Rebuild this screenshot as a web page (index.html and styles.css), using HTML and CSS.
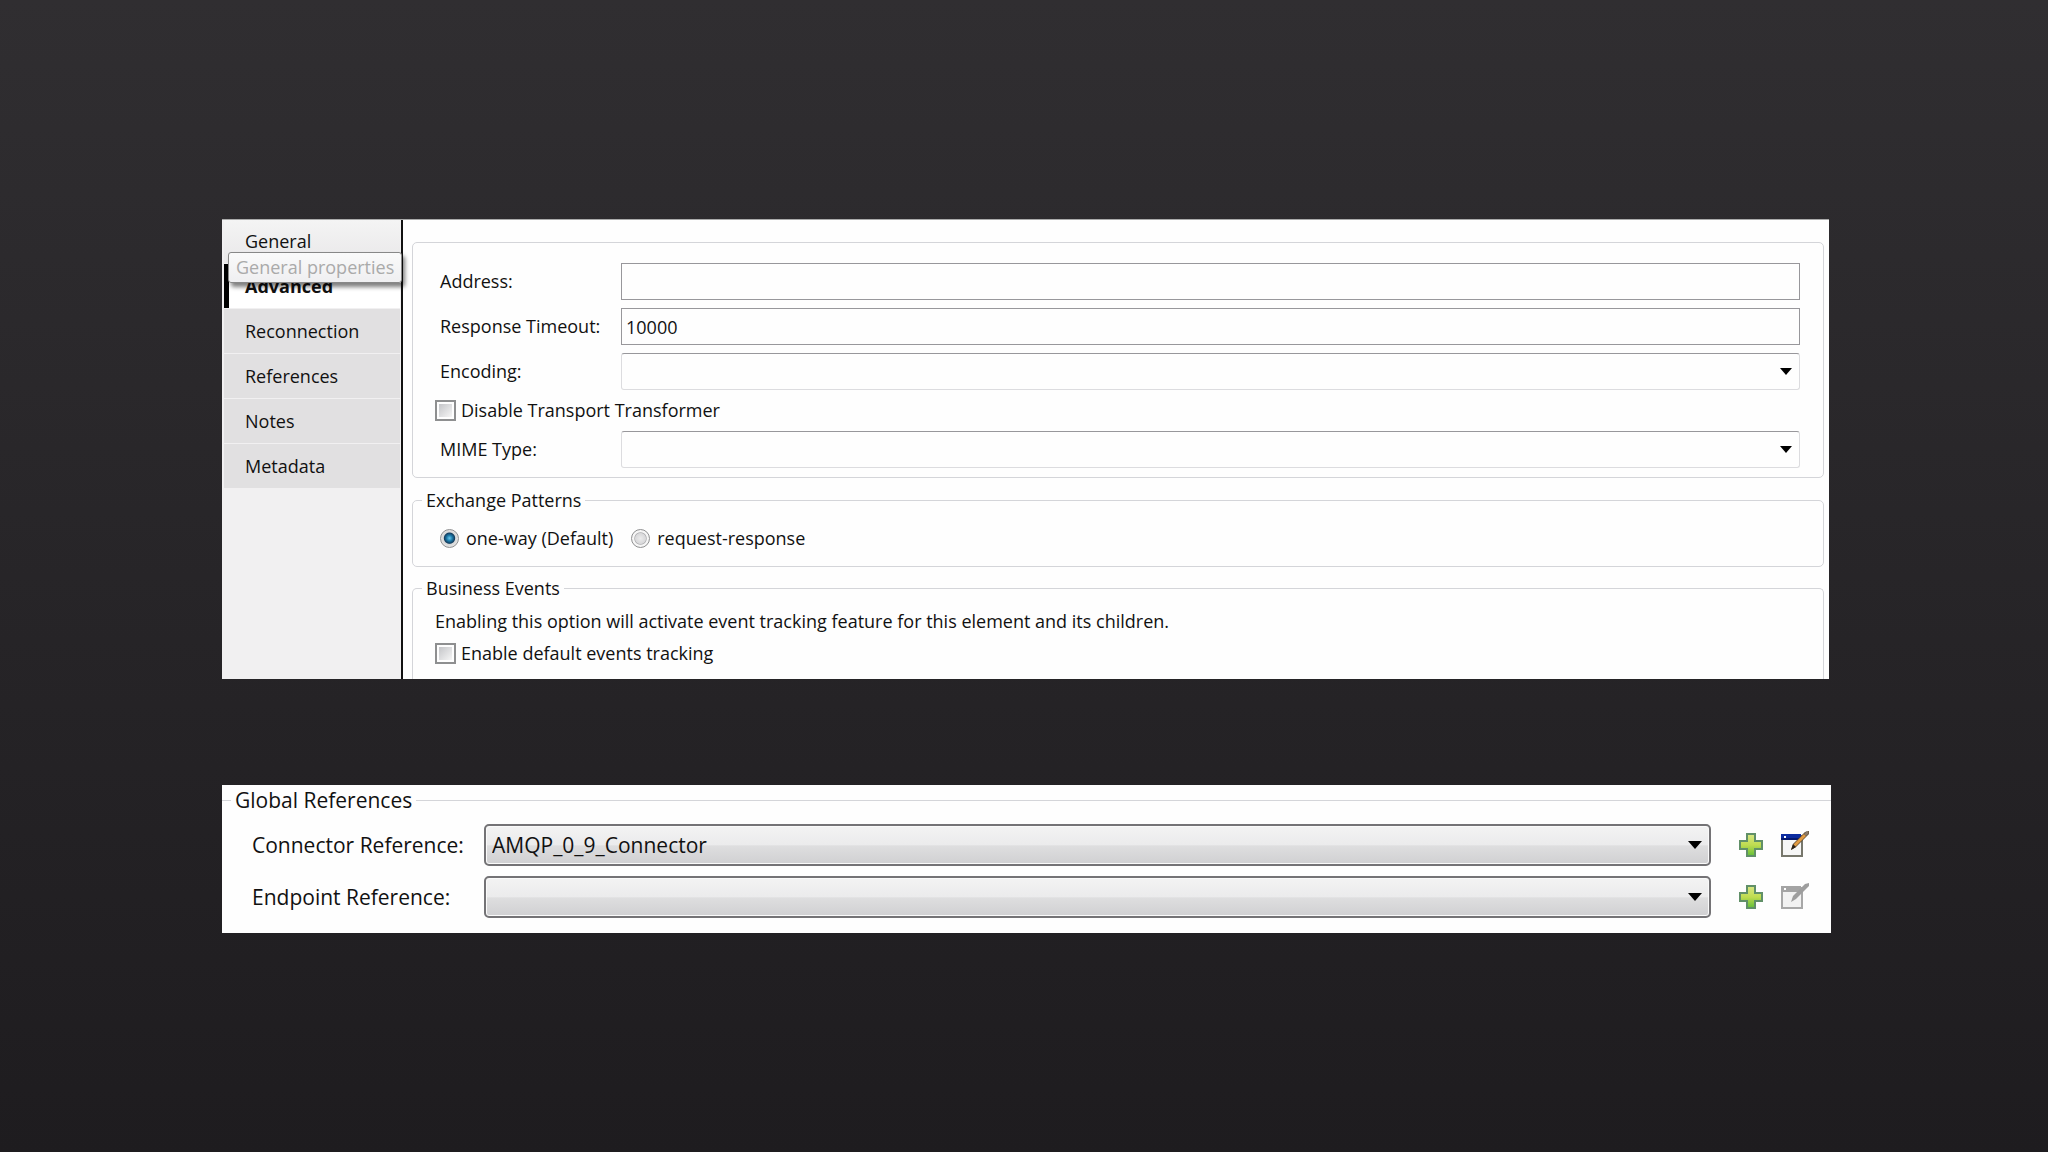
FILE: index.html
```
<!DOCTYPE html>
<html lang="en">
<head>
    <meta charset="utf-8">
    <title>Endpoint properties</title>
    <link rel="stylesheet" href="styles.css">
</head>

<body>
    <main class="slide">
        <section class="panel properties">
            <nav class="tabs">
                <div class="tab-wrap">
                    <button type="button" class="tab first" aria-describedby="tip">General</button>
                    <span class="tooltip" id="tip" role="tooltip">General properties</span>
                </div>
                <button type="button" class="tab active">Advanced</button>
                <button type="button" class="tab">Reconnection</button>
                <button type="button" class="tab">References</button>
                <button type="button" class="tab">Notes</button>
                <button type="button" class="tab">Metadata</button>
            </nav>

            <form class="content">
                <fieldset class="group fields">
                    <label class="name" for="address">Address:</label>
                    <input class="text" type="text" id="address">
                    <label class="name" for="timeout">Response Timeout:</label>
                    <input class="text" type="text" id="timeout" value="10000">
                    <label class="name" for="encoding">Encoding:</label>
                    <select class="combo" id="encoding"><option></option></select>
                    <label class="option wide"><input class="check" type="checkbox"> Disable Transport Transformer</label>
                    <label class="name" for="mime">MIME Type:</label>
                    <select class="combo" id="mime"><option></option></select>
                </fieldset>

                <fieldset class="group patterns">
                    <legend>Exchange Patterns</legend>
                    <div class="radios">
                        <label class="option"><input class="radio" type="radio" name="pattern" checked> one-way (Default)</label>
                        <label class="option"><input class="radio" type="radio" name="pattern"> request-response</label>
                    </div>
                </fieldset>

                <fieldset class="group events">
                    <legend>Business Events</legend>
                    <p class="note">Enabling this option will activate event tracking feature for this element and its children.</p>
                    <label class="option"><input class="check" type="checkbox"> Enable default events tracking</label>
                </fieldset>
            </form>
        </section>

        <section class="panel">
            <form class="ref-form">
                <fieldset class="references">
                    <legend>Global References</legend>
                    <div class="ref-grid">
                        <label for="connector">Connector Reference:</label>
                        <select class="button-combo" id="connector"><option>AMQP_0_9_Connector</option></select>
                        <div class="actions">
                            <button type="button" class="icon" aria-label="Add connector">
                                <svg width="24" height="24" viewBox="0 0 24 24"><use href="#plus"/></svg>
                            </button>
                            <button type="button" class="icon" aria-label="Edit connector">
                                <svg width="28" height="28" viewBox="0 0 28 28">
                                    <rect x="1" y="5" width="20" height="20" fill="#f6f6f6" stroke="#77776c" stroke-width="2"/>
                                    <rect x="0" y="3" width="20" height="6" fill="#0c2ca0"/>
                                    <rect x="0" y="7" width="20" height="2" fill="#061a70"/>
                                    <rect x="3" y="5" width="2" height="2" fill="#fff"/>
                                    <path d="M10 19 L12 13 L24 1 L28 0 L28 3 L15 16 Z" fill="#54452f"/>
                                    <path d="M13 15 L24 4" stroke="#e09a42" stroke-width="3"/>
                                    <path d="M24 4 L27 1" stroke="#8a7a68" stroke-width="3"/>
                                    <path d="M10 19 L12 13 L15 16 Z" fill="#2a2018"/>
                                </svg>
                            </button>
                        </div>

                        <label for="endpoint">Endpoint Reference:</label>
                        <select class="button-combo" id="endpoint"><option></option></select>
                        <div class="actions">
                            <button type="button" class="icon" aria-label="Add endpoint">
                                <svg width="24" height="24" viewBox="0 0 24 24"><use href="#plus"/></svg>
                            </button>
                            <button type="button" class="icon" aria-label="Edit endpoint" disabled>
                                <svg width="28" height="28" viewBox="0 0 28 28">
                                    <rect x="1" y="5" width="20" height="20" fill="#f2f2f2" stroke="#a8a8a8" stroke-width="2"/>
                                    <rect x="0" y="3" width="20" height="6" fill="#a4a4a4"/>
                                    <rect x="3" y="5" width="2" height="2" fill="#fff"/>
                                    <path d="M10 19 L12 13 L24 1 L28 0 L28 3 L15 16 Z" fill="#9e9e9e"/>
                                </svg>
                            </button>
                        </div>
                    </div>
                </fieldset>
            </form>
        </section>
    </main>

    <svg class="defs" width="0" height="0" aria-hidden="true">
        <defs>
            <linearGradient id="green" x1="0" y1="0" x2="0" y2="1">
                <stop offset="0" stop-color="#d8e684"/>
                <stop offset="0.5" stop-color="#bfdc50"/>
                <stop offset="1" stop-color="#62bf38"/>
            </linearGradient>
            <path id="plus" d="M8 1 H16 V8 H23 V16 H16 V23 H8 V16 H1 V8 H8 Z" fill="url(#green)" stroke="#619068" stroke-width="2"/>
        </defs>
    </svg>
</body>
</html>
```
FILE: styles.css
```
* {
    box-sizing: border-box;
}

body {
    margin: 0;
    min-height: 100vh;
    background: linear-gradient(#302e31, #272528 50%, #1e1c1f);
    color: #111;
    font: 18px/25px "Open Sans", "Noto Sans", sans-serif;
}

.slide {
    display: flex;
    flex-direction: column;
    gap: 106px;
    padding: 219px 217px 0 222px;
}

.panel {
    background: #fefefe;
}

.properties {
    display: flex;
    margin-right: 2px;
    border-top: 1px solid #aaa;
}

/* left side tabs */
.tabs {
    display: flex;
    flex-direction: column;
    gap: 1px;
    width: 181px;
    padding: 0 1px 0 2px;
    background: #f1f0f1;
    border-right: 2px solid #111;
}

.tab-wrap {
    position: relative;
}

.tab {
    display: block;
    width: 100%;
    height: 44px;
    padding: 0 0 0 21px;
    border: 0;
    background: #e1e0e1;
    color: inherit;
    font: inherit;
    text-align: left;
}

.tab.first {
    height: 43px;
    background: linear-gradient(#f4f4f4, #e9e8e9);
}

.tab.active {
    padding-left: 16px;
    border-left: 5px solid #000;
    background: #fff;
    font-weight: bold;
}

.tooltip {
    position: absolute;
    top: 32px;
    left: 4px;
    padding: 2px 7px;
    border: 1px solid #888;
    border-radius: 3px;
    background: linear-gradient(#fafafa, #efeff1);
    box-shadow: 3px 4px 4px rgba(0, 0, 0, 0.5);
    color: #aaa;
    white-space: nowrap;
}

.content {
    flex: 1;
    padding: 22px 5px 0 9px;
}

fieldset {
    min-width: 0;
    margin: 0;
}

legend {
    padding: 0 4px;
}

.group {
    padding: 0 23px 0 9px;
    border: 1px solid #d4d5d9;
    border-radius: 5px;
}

.fields {
    display: grid;
    grid-template-columns: 186px 1fr;
    gap: 8px 0;
    align-items: center;
    margin-bottom: 10px;
    padding: 20px 23px 9px 22px;
}

.name {
    padding-left: 5px;
}

.wide {
    grid-column: 1 / 3;
}

.text,
.combo {
    width: 100%;
    height: 37px;
    padding: 0 4px;
    border: 1px solid #98979b;
    background: #fefefe;
    color: inherit;
    font: inherit;
}

.combo,
.button-combo {
    appearance: none;
    background-image: url("data:image/svg+xml,%3Csvg xmlns='http://www.w3.org/2000/svg' width='12' height='7'%3E%3Cpath d='M0 0H12L6 7Z'/%3E%3C/svg%3E");
    background-repeat: no-repeat;
    background-position: right 7px center;
}

.combo {
    border-color: #98979b #dcdcdf #dcdcdf;
    border-radius: 3px;
}

.option {
    display: flex;
    align-items: center;
    gap: 5px;
}

.check {
    appearance: none;
    width: 21px;
    height: 21px;
    margin: 0;
    padding: 2px;
    border: 2px solid #8e8f90;
    background: linear-gradient(135deg, #c4c5c8, #f6f6f6) content-box #f2f2f2;
}

.patterns {
    margin-bottom: 9px;
}

.radios {
    display: flex;
    gap: 18px;
    padding: 13px 0 15px 18px;
}

.radios .option {
    gap: 7px;
}

.radio {
    appearance: none;
    width: 19px;
    height: 19px;
    margin: 0;
    border: 1px solid #8e8f90;
    border-radius: 50%;
    background: radial-gradient(#ececec, #d8d8da 42%, #b4b4b6 48%, #f6f6f6 56%);
}

.radio:checked {
    background: radial-gradient(circle at 50% 48%, #6cc8ec, #1f7fae 22%, #123e60 42%, #d8d8d8 50%, #f4f4f4);
}

.events {
    padding: 8px 23px 13px 22px;
    border-bottom: 0;
    border-radius: 5px 5px 0 0;
}

.events legend {
    margin-left: -13px;
}

.note {
    margin: 0 0 7px;
}

/* global references */
.ref-form {
    padding-top: 3px;
}

.references {
    padding: 11px 22px 15px 30px;
    border: 0 solid #d4d5d9;
    border-top-width: 1px;
    font-size: 21px;
}

.references legend {
    margin-left: -21px;
}

.ref-grid {
    display: grid;
    grid-template-columns: 232px 1fr auto;
    gap: 10px 0;
    align-items: center;
}

.button-combo {
    width: 100%;
    height: 42px;
    padding: 0 6px;
    border: 2px solid #747376;
    border-radius: 5px;
    background-color: #e4e4e6;
    background-image: url("data:image/svg+xml,%3Csvg xmlns='http://www.w3.org/2000/svg' width='14' height='8'%3E%3Cpath d='M0 0H14L7 8Z'/%3E%3C/svg%3E"), linear-gradient(#f3f3f3, #ebebec 50%, #dededf 52%, #d0d0d2);
    background-position: right 7px center, 0 0;
    box-shadow: inset 0 0 0 1px #fafafa;
    color: inherit;
    font: inherit;
}

.actions {
    display: flex;
    align-items: center;
    gap: 18px;
    padding-left: 28px;
}

.icon {
    display: flex;
    padding: 0;
    border: 0;
    background: none;
}

.defs {
    position: absolute;
}
```
